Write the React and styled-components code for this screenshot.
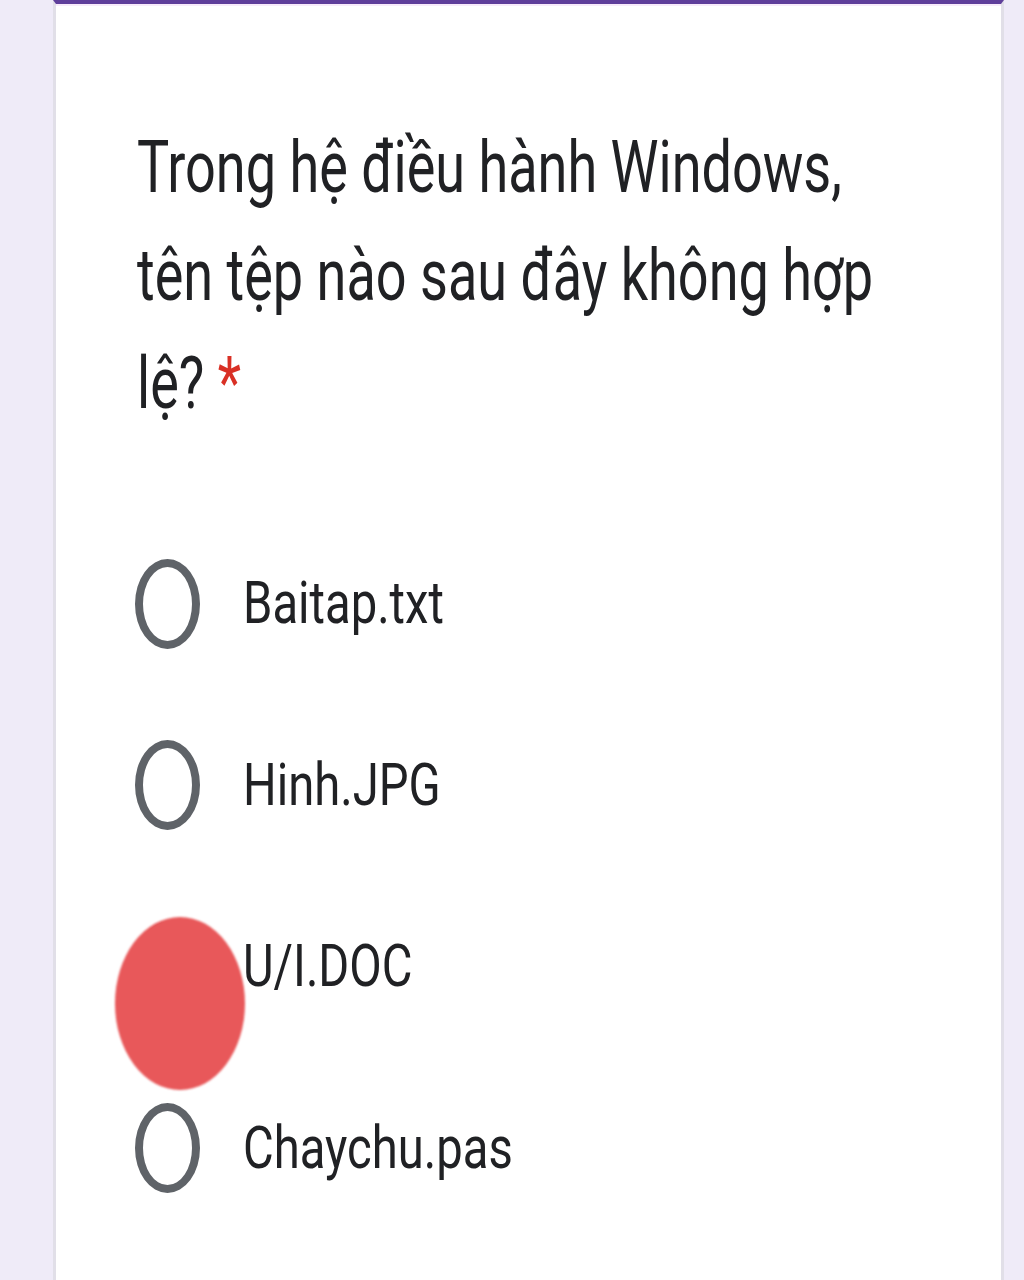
import styled, { createGlobalStyle } from "styled-components"

const GlobalStyle = createGlobalStyle`
  html, body {
    margin: 0;
    padding: 0;
    background: #efebf8;
  }
  body {
    font-family: Roboto, "Noto Sans", Arial, sans-serif;
    color: #202124;
  }
`

const questionLines = ["Trong hệ điều hành Windows,", "tên tệp nào sau đây không hợp", "lệ?"]

const options = [
  { label: "Baitap.txt" },
  { label: "Hinh.JPG" },
  { label: "U/I.DOC", marked: true },
  { label: "Chaychu.pas" },
]

const App = () => {
  return (
    <>
      <GlobalStyle />
      <Page>
        <Card>
          <Question>
            {questionLines.map((line, i) => (
              <QuestionLine key={i}>
                {line}
                {i === questionLines.length - 1 && <Required> *</Required>}
              </QuestionLine>
            ))}
          </Question>
          <OptionList>
            {options.map((opt) => (
              <OptionRow key={opt.label}>
                <Radio />
                {opt.marked && <Mark />}
                <OptionLabel>{opt.label}</OptionLabel>
              </OptionRow>
            ))}
          </OptionList>
        </Card>
      </Page>
    </>
  )
}

export default App

const Page = styled.div`
  min-height: 1280px;
  display: flex;
`

const Card = styled.main`
  margin-left: 53px;
  width: 951px;
  min-height: 1276px;
  background: #fff;
  border-top: 4px solid #5f3f9b;
  border-left: 3px solid #e1dfe8;
  border-right: 3px solid #e1dfe8;
  padding: 109px 0 0 81px;
  box-sizing: border-box;
  box-shadow: inset 0 2px 0 #f8ebfb;
`

const Question = styled.div`
  font-size: 73px;
  line-height: 108px;
  white-space: nowrap;
  color: #202124;
`

const QuestionLine = styled.div`
  transform: scaleX(0.74);
  transform-origin: left center;
`

const Required = styled.span`
  color: #d93025;
`

const OptionList = styled.div`
  margin-top: 76px;
  margin-left: -2px;
  display: flex;
  flex-direction: column;
`

const OptionRow = styled.div`
  position: relative;
  height: 181.5px;
  display: flex;
  align-items: center;
  gap: 43px;
`

const Radio = styled.span`
  flex: none;
  width: 65px;
  height: 90px;
  border: 8px solid #5f6368;
  border-radius: 50%;
  box-sizing: border-box;
`

const Mark = styled.span`
  position: absolute;
  left: -20px;
  top: 41px;
  width: 130px;
  height: 173px;
  border-radius: 50%;
  background: #e8585a;
  filter: blur(0.8px);
`

const OptionLabel = styled.span`
  position: relative;
  font-size: 59px;
  line-height: 1;
  color: #202124;
  white-space: nowrap;
  transform: scaleX(0.8);
  transform-origin: left center;
  margin-top: -2px;
`
